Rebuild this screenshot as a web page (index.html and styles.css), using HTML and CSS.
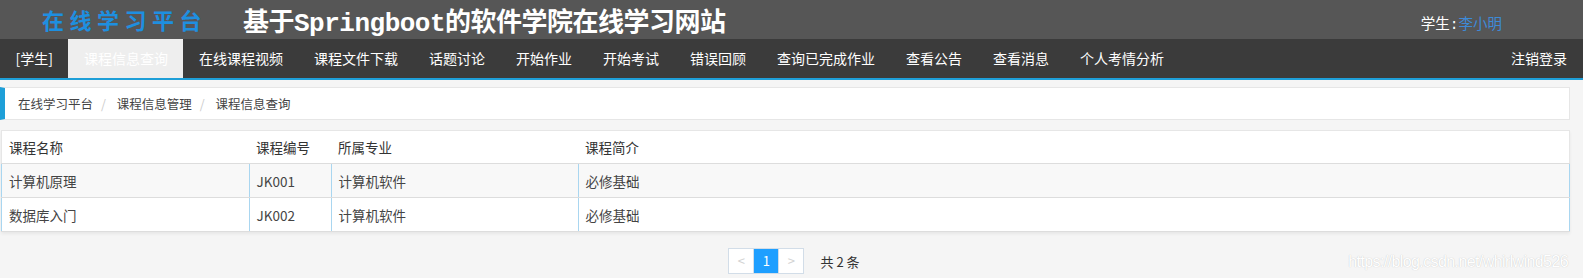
FILE: index.html
```html
<!doctype html>
<html lang="zh-CN">
	<head>
		<meta charset="utf-8">
		<title>在线学习平台</title>
		<link rel="stylesheet" href="styles.css">
	</head>
	<body>
		<!-- Top header with logo, site title and current user -->
		<div class="header">
			<span class="logo">在线学习平台</span>
			<span class="site-title">基于Springboot的软件学院在线学习网站</span>
			<span class="user">学生:<span class="user-name">李小明</span></span>
		</div>

		<!-- Main navigation -->
		<ul class="nav">
			<li class="nav-item">[学生]</li>
			<li class="nav-item active">课程信息查询</li>
			<li class="nav-item">在线课程视频</li>
			<li class="nav-item">课程文件下载</li>
			<li class="nav-item">话题讨论</li>
			<li class="nav-item">开始作业</li>
			<li class="nav-item">开始考试</li>
			<li class="nav-item">错误回顾</li>
			<li class="nav-item">查询已完成作业</li>
			<li class="nav-item">查看公告</li>
			<li class="nav-item">查看消息</li>
			<li class="nav-item">个人考情分析</li>
			<li class="nav-item logout">注销登录</li>
		</ul>

		<div class="content">
			<div class="breadcrumb">
				<span>在线学习平台</span><span class="sep">/</span>
				<span>课程信息管理</span><span class="sep">/</span>
				<span>课程信息查询</span>
			</div>

			<table class="course-table">
				<thead>
					<tr>
						<th class="col-name">课程名称</th>
						<th class="col-code">课程编号</th>
						<th class="col-major">所属专业</th>
						<th>课程简介</th>
					</tr>
				</thead>
				<tbody>
					<tr>
						<td>计算机原理</td>
						<td>JK001</td>
						<td>计算机软件</td>
						<td>必修基础</td>
					</tr>
					<tr>
						<td>数据库入门</td>
						<td>JK002</td>
						<td>计算机软件</td>
						<td>必修基础</td>
					</tr>
				</tbody>
			</table>

			<div class="pager">
				<div class="pages">
					<span class="page disabled">&lt;</span>
					<span class="page current">1</span>
					<span class="page disabled">&gt;</span>
				</div>
				<span class="count">共 2 条</span>
			</div>
		</div>

		<div class="watermark">https://blog.csdn.net/whirlwind526</div>
	</body>
</html>
```

FILE: styles.css
```css
/* Page setup */

body {
	margin: 0;
	background-color: #f5f5f5;
	font-family: "Noto Sans CJK SC", "Noto Sans", sans-serif;
	font-size: 14px;
	color: #333;
	position: relative;
	height: 278px;
	overflow: hidden;
}

/* Header */

.header {
	height: 39px;
	background-color: #565656;
	display: flex;
	align-items: center;
	font-family: "Liberation Mono", "Noto Sans CJK SC", monospace;
}

.logo {
	margin-left: 42px;
	color: #1e8fe0;
	font-size: 22px;
	letter-spacing: 5.5px;
	font-weight: bold;
}

.site-title {
	margin-left: 36px;
	color: #fff;
	font-size: 26px;
	font-weight: bold;
	letter-spacing: -0.5px;
}

.user {
	margin-left: auto;
	margin-right: 81px;
	margin-top: 6px;
	color: #fff;
	font-size: 14.5px;
}

.user-name { color: #3e8ad6; }

/* Navigation */

.nav {
	margin: 0;
	padding: 0;
	list-style: none;
	display: flex;
	height: 39px;
	background-color: #3b3b3b;
	border-bottom: 2px solid #1e9fd8;
}

.nav-item {
	padding: 0 15.5px;
	line-height: 39px;
	color: #fff;
	font-size: 14px;
	white-space: nowrap;
}

.nav-item.active {
	background-color: #eee;
	color: #fff;
}

.nav-item.logout {
	margin-left: auto;
	padding-right: 16px;
}

/* Content area */

.content {
	padding: 7px 13px 0 0;
}

.breadcrumb {
	height: 31px;
	line-height: 31px;
	background-color: #fff;
	border: 1px solid #e6e6e6;
	border-left: 5px solid #1e9fd8;
	padding-left: 13px;
	font-size: 12.5px;
	color: #444;
}

.breadcrumb .sep {
	color: #ccc;
	margin: 0 8px;
}

.course-table {
	margin-top: 10px;
	margin-left: 1px;
	width: calc(100% - 1px);
	border-collapse: collapse;
	background-color: #fff;
	box-shadow: 0 2px 3px rgba(0, 0, 0, 0.06);
}

.course-table th,
.course-table td {
	text-align: left;
	font-weight: normal;
	padding: 0 0 0 7px;
	font-size: 13.5px;
}

.course-table th {
	height: 32px;
	border-top: 1px solid #e6e6e6;
	border-bottom: 1px solid #ddd;
	color: #333;
}

.course-table th:first-child { border-left: 1px solid #e6e6e6; }
.course-table th:last-child { border-right: 1px solid #e6e6e6; }

.course-table td {
	height: 33px;
	border: 1px solid #a9d6f0;
	border-top: 1px solid #ddd;
	border-bottom: 1px solid #ddd;
	color: #444;
}

.course-table tbody tr:first-child td { background-color: #f8f8f8; }

.col-name { width: 240px; }
.col-code { width: 75px; }
.col-major { width: 240px; }

/* Pagination */

.pager {
	margin-top: 16px;
	display: flex;
	justify-content: center;
	align-items: center;
	padding-left: 18px;
}

.pages {
	display: flex;
	border: 1px solid #d2dde8;
	background-color: #fff;
}

.page {
	width: 24px;
	height: 24px;
	line-height: 24px;
	text-align: center;
	font-size: 13px;
}

.page.disabled { color: #d2d2d2; }

.page.disabled:first-child { border-right: 1px solid #d2dde8; }
.page.disabled:last-child { border-left: 1px solid #d2dde8; }

.page.current {
	background-color: #1e9fff;
	color: #fff;
}

.count {
	margin-left: 16px;
	color: #333;
	font-size: 13px;
}

.watermark {
	position: absolute;
	right: 15px;
	bottom: 7px;
	font-family: "Liberation Sans", sans-serif;
	font-size: 16px;
	letter-spacing: -0.6px;
	color: #fff;
	text-shadow: 0 0 1px #bbb;
}
```
